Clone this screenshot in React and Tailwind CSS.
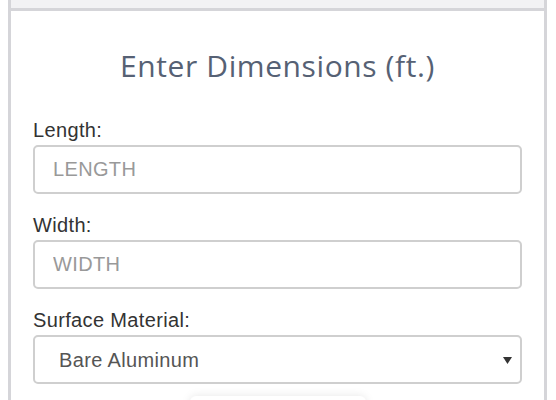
import React from "react";

export default function App() {
  const label = "block text-[20px] tracking-[0.35px] leading-[21px] text-[#333] mb-[4px]";
  const input =
    "block w-full h-[49px] rounded-[5px] border-2 border-[#cfcfcf] bg-white px-[18px] text-[20px] tracking-[0.35px] text-[#555] placeholder:text-[#999] outline-none";
  return (
    <div className="w-[556px] h-[400px] overflow-hidden bg-white" style={{ fontFamily: '"Liberation Sans", Arial, sans-serif' }}>
      <div className="ml-[8px] w-[539px] border-x-[3px] border-[#d5d5d9]">
        <div className="h-[8px] bg-[#f2f2f4]" />
        <div className="border-t-[3px] border-[#d5d5d9] px-[22px] pt-[35px]">
          <h2
            className="text-center text-[30px] tracking-[0.6px] leading-[40px] text-[#566174] mb-[34px]"
            style={{ fontFamily: '"Open Sans", sans-serif' }}
          >
            Enter Dimensions (ft.)
          </h2>
          <div className="flex flex-col gap-[21px]">
            <div>
              <label className={label}>Length:</label>
              <input className={input} placeholder="LENGTH" />
            </div>
            <div>
              <label className={label}>Width:</label>
              <input className={input} placeholder="WIDTH" />
            </div>
            <div>
              <label className={label}>Surface Material:</label>
              <div className="relative">
                <select className={input + " appearance-none pl-[24px]"} defaultValue="bare">
                  <option value="bare">Bare Aluminum</option>
                </select>
                <svg
                  className="pointer-events-none absolute right-[10px] top-[22px]"
                  width="9"
                  height="7"
                  viewBox="0 0 9 7"
                >
                  <path d="M0 0H9L4.5 7Z" fill="#333" />
                </svg>
              </div>
            </div>
          </div>
          <div className="mx-auto mt-[12px] h-[48px] w-[176px] rounded-[6px] bg-white shadow-[0_0_10px_rgba(0,0,0,0.1)]" />
        </div>
      </div>
    </div>
  );
}
